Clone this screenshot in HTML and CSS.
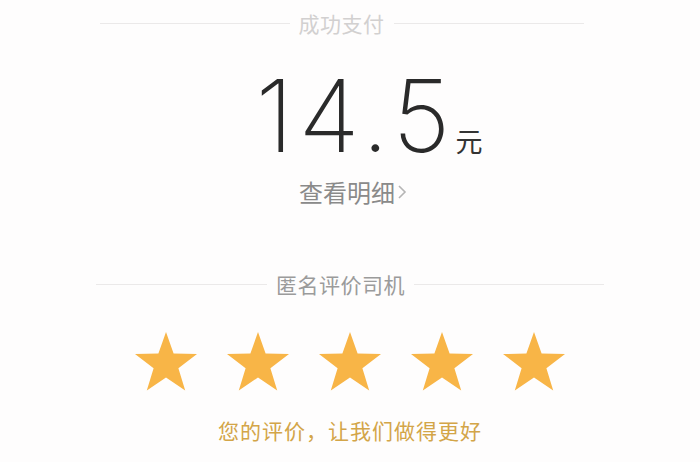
FILE: index.html
```html
<!DOCTYPE html>
<html lang="zh">
<head>
<meta charset="utf-8">
<link rel="stylesheet" href="styles.css">
</head>
<body>
<main class="page">
  <div class="divider divider-top">
    <span class="rule rule-left"></span>
    <span class="divider-text muted">成功支付</span>
    <span class="rule"></span>
  </div>
  <div class="amount">
    <span class="amount-num">14.5</span><span class="amount-unit">元</span>
  </div>
  <div class="detail">查看明细<svg class="chev" viewBox="0 0 10 16"><polyline points="2,2 8,8 2,14"/></svg></div>
  <div class="divider divider-rate">
    <span class="rule rule-left"></span>
    <span class="divider-text">匿名评价司机</span>
    <span class="rule"></span>
  </div>
  <div class="stars">
    <svg class="star" viewBox="0 0 64 60"><path d="M32 1 L39.6 22.6 L63 23 L44.4 37.2 L51.2 59.5 L32 46.4 L12.8 59.5 L19.6 37.2 L1 23 L24.4 22.6 Z"/></svg>
    <svg class="star" viewBox="0 0 64 60"><path d="M32 1 L39.6 22.6 L63 23 L44.4 37.2 L51.2 59.5 L32 46.4 L12.8 59.5 L19.6 37.2 L1 23 L24.4 22.6 Z"/></svg>
    <svg class="star" viewBox="0 0 64 60"><path d="M32 1 L39.6 22.6 L63 23 L44.4 37.2 L51.2 59.5 L32 46.4 L12.8 59.5 L19.6 37.2 L1 23 L24.4 22.6 Z"/></svg>
    <svg class="star" viewBox="0 0 64 60"><path d="M32 1 L39.6 22.6 L63 23 L44.4 37.2 L51.2 59.5 L32 46.4 L12.8 59.5 L19.6 37.2 L1 23 L24.4 22.6 Z"/></svg>
    <svg class="star" viewBox="0 0 64 60"><path d="M32 1 L39.6 22.6 L63 23 L44.4 37.2 L51.2 59.5 L32 46.4 L12.8 59.5 L19.6 37.2 L1 23 L24.4 22.6 Z"/></svg>
  </div>
  <div class="hint">您的评价，让我们做得更好</div>
</main>
</body>
</html>
```
FILE: styles.css
```css
html, body {
  margin: 0;
  padding: 0;
  background: #fefdfd;
}
.page {
  width: 700px;
  height: 462px;
  overflow: hidden;
  display: flex;
  flex-direction: column;
  align-items: center;
  font-family: "Noto Sans CJK SC", "Noto Sans", sans-serif;
}
.divider {
  display: flex;
  align-items: center;
  gap: 9px;
}
.rule {
  display: block;
  height: 1px;
  background: #ebe9e9;
  flex: 1;
}
.divider-top {
  width: 484px;
  height: 46px;
  margin-left: -17px;
}
.divider-top .rule-left { flex: 0 0 190px; }
.divider-text {
  font-size: 21px;
  line-height: 24px;
  color: #9b9b9b;
  letter-spacing: 0.5px;
  white-space: nowrap;
}
.divider-text.muted {
  color: #d2d0d0;
}
.amount {
  display: flex;
  align-items: baseline;
  margin-top: 20px;
  height: 100px;
  margin-left: 38px;
  color: #2a2a2a;
}
.amount-num {
  font-family: "Inter", sans-serif;
  font-weight: 250;
  font-size: 100px;
  line-height: 100px;
  letter-spacing: 5px;
}
.amount-unit {
  font-size: 27px;
  line-height: 30px;
  margin-left: 0;
  color: #333;
}
.detail {
  display: flex;
  align-items: center;
  font-size: 24px;
  line-height: 30px;
  color: #8a8a8a;
  margin-top: 11px;
  margin-left: 6px;
}
.chev {
  width: 10px;
  height: 16px;
  margin-left: 2px;
  fill: none;
  stroke: #b5b5b5;
  stroke-width: 1.6;
}
.divider-rate {
  width: 508px;
  margin-top: 64px;
  height: 26px;
}
.divider-rate .rule-left { flex: 0 0 171px; }
.stars {
  display: flex;
  gap: 28px;
  margin-top: 34px;
}
.star {
  width: 64px;
  height: 60px;
  fill: #f8b547;
}
.hint {
  margin-top: 26px;
  font-size: 21px;
  line-height: 26px;
  color: #d3a548;
  letter-spacing: 1px;
}
```
